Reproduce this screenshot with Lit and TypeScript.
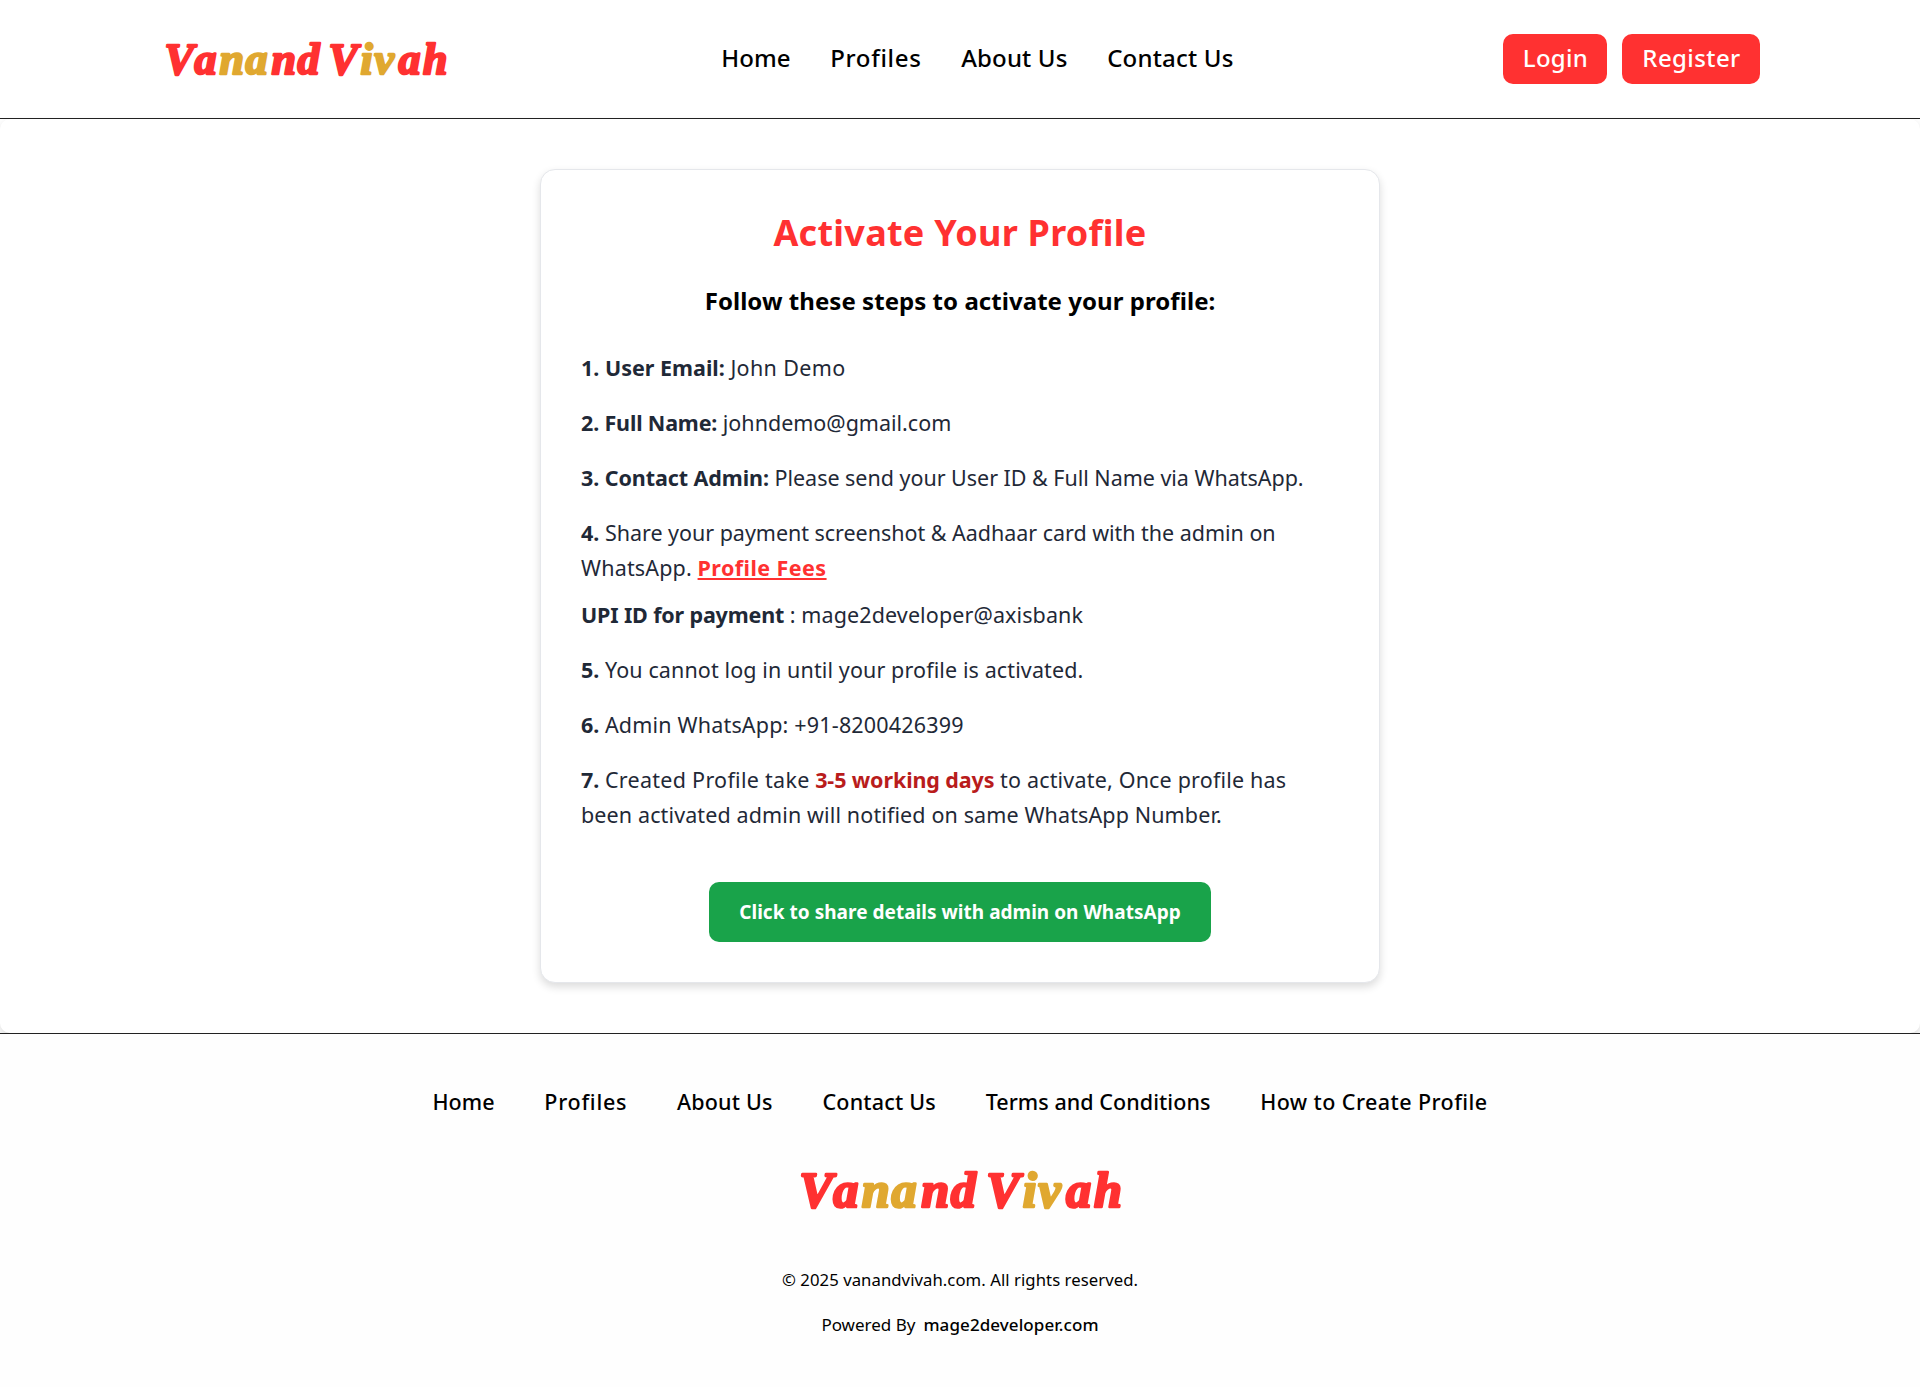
import { LitElement, html, svg, css } from "lit";
import { customElement, property } from "lit/decorators.js";
import { styleMap } from "lit/directives/style-map.js";

/** A piece of text with its tracking in pixels and an optional style name. */
interface Run {
  text: string;
  track: number;
  kind?: "bold" | "fees" | "days";
}

const run = (r: Run) =>
  html`<span class=${r.kind ?? "plain"} style=${styleMap({ letterSpacing: `${r.track}px` })}>${r.text}</span>`;

const NAV: Run[] = [
  { text: "Home", track: 0 },
  { text: "Profiles", track: 0.68 },
  { text: "About Us", track: 0.14 },
  { text: "Contact Us", track: 0.2 },
];

const ACTIONS: Run[] = [
  { text: "Login", track: 0.3 },
  { text: "Register", track: 0.4 },
];

const FOOTER_LINKS: Run[] = [
  { text: "Home", track: 0.05 },
  { text: "Profiles", track: 0.75 },
  { text: "About Us", track: 0.2 },
  { text: "Contact Us", track: 0.2 },
  { text: "Terms and Conditions", track: 0.06 },
  { text: "How to Create Profile", track: 0.43 },
];

const STEPS: { tight?: boolean; lines: Run[][] }[] = [
  { lines: [[{ text: "1. User Email:", track: 0, kind: "bold" }, { text: "John Demo", track: 0.36 }]] },
  { lines: [[{ text: "2. Full Name:", track: -0.16, kind: "bold" }, { text: "johndemo@gmail.com", track: -0.01 }]] },
  {
    lines: [
      [
        { text: "3. Contact Admin:", track: -0.08, kind: "bold" },
        { text: "Please send your User ID & Full Name via WhatsApp.", track: -0.025 },
      ],
    ],
  },
  {
    lines: [
      [
        { text: "4.", track: 0, kind: "bold" },
        { text: "Share your payment screenshot & Aadhaar card with the admin on", track: -0.03 },
      ],
      [{ text: "WhatsApp.", track: 0.18 }, { text: "Profile Fees", track: 0.43, kind: "fees" }],
    ],
  },
  {
    tight: true,
    lines: [[{ text: "UPI ID for payment", track: -0.16, kind: "bold" }, { text: ": mage2developer@axisbank", track: 0.11 }]],
  },
  {
    lines: [
      [{ text: "5.", track: 0, kind: "bold" }, { text: "You cannot log in until your profile is activated.", track: 0.115 }],
    ],
  },
  { lines: [[{ text: "6.", track: 0, kind: "bold" }, { text: "Admin WhatsApp: +91-8200426399", track: 0.185 }]] },
  {
    lines: [
      [
        { text: "7.", track: 0, kind: "bold" },
        { text: "Created Profile take", track: 0.28 },
        { text: "3-5 working days", track: -0.11, kind: "days" },
        { text: "to activate, Once profile has", track: 0.185 },
      ],
      [{ text: "been activated admin will notified on same WhatsApp Number.", track: 0.122 }],
    ],
  },
];

@customElement("brand-logo")
export class BrandLogo extends LitElement {
  static styles = css`
    :host { display: block; }
    .mark { display: block; width: 100%; height: auto; overflow: visible; }
    .word {
      font-family: "Liberation Serif", serif;
      font-size: 44px;
      font-weight: 700;
      font-style: italic;
      stroke-width: 2.4;
      stroke-linejoin: round;
    }
    .red { fill: #ff3131; stroke: #ff3131; }
    .gold { fill: #e0a830; stroke: #e0a830; }
  `;

  render() {
    const part = (cls: string, x: string, text: string) => svg`<tspan class=${cls} x=${x}>${text}</tspan>`;
    return html`<svg class="mark" viewBox="0 0 292 56" role="img" aria-label="Vanand Vivah">
      <text class="word" y="43">${part("red", "4.5 34.5", "Va")}${part("gold", "59.5 85.5", "na")}${part("red", "111.5 137.5", "nd")}${part("red", "168.5", "V")}${part("gold", "200.5 214.5", "iv")}${part("red", "238.5 263", "ah")}</text>
    </svg>`;
  }
}

@customElement("site-header")
export class SiteHeader extends LitElement {
  static styles = css`
    :host { display: block; }
    .bar {
      box-sizing: border-box;
      height: 119px;
      padding: 0 160px;
      display: flex;
      align-items: center;
      justify-content: space-between;
      border-bottom: 1px solid #222;
      background: #fff;
      font-size: 24px;
      font-weight: 500;
      line-height: 36px;
      color: #000;
    }
    .logo { width: 292px; }
    .nav { display: flex; gap: 39.7px; padding-bottom: 2px; }
    .actions { display: flex; gap: 15px; }
    .btn {
      box-sizing: border-box;
      height: 50px;
      padding: 6px 0 8px 1px;
      border-radius: 10px;
      background: #ff3131;
      color: #fff;
      text-align: center;
    }
    .login { width: 104px; }
    .register { width: 138px; }
  `;

  render() {
    return html`<header class="bar">
      <brand-logo class="logo"></brand-logo>
      <nav class="nav">${NAV.map((n) => html`<a>${run(n)}</a>`)}</nav>
      <div class="actions">
        <a class="btn login">${run(ACTIONS[0])}</a>
        <a class="btn register">${run(ACTIONS[1])}</a>
      </div>
    </header>`;
  }
}

@customElement("activation-card")
export class ActivationCard extends LitElement {
  @property({ attribute: false }) steps = STEPS;

  static styles = css`
    :host { display: block; }
    .card {
      box-sizing: border-box;
      width: 840px;
      padding: 41px 40px 40px;
      border: 1px solid #e5e7eb;
      border-radius: 15px;
      background: #fff;
      box-shadow: 0 4px 8px rgba(0, 0, 0, 0.14);
      display: flex;
      flex-direction: column;
      align-items: center;
    }
    .title { margin: 0; font-size: 36px; font-weight: 700; line-height: 44px; color: #ff3131; letter-spacing: 0.26px; }
    .subtitle { margin: 28px 0 31px; font-size: 24px; font-weight: 700; line-height: 36px; color: #000; letter-spacing: 0.05px; }
    .steps { align-self: stretch; font-size: 21.5px; line-height: 35px; color: #1f2937; }
    .step { margin-top: 20px; white-space: nowrap; }
    .step:first-child { margin-top: 0; }
    .tight { margin-top: 12px; }
    .bold, .fees, .days { font-weight: 700; }
    .fees { color: #ff3131; text-decoration: underline; text-decoration-thickness: 2px; text-underline-offset: 2px; }
    .days { color: #b91c1c; }
    .share {
      margin-top: 50px;
      width: 502px;
      height: 60px;
      border-radius: 10px;
      background: #19a34a;
      color: #fff;
      font-size: 19px;
      font-weight: 700;
      line-height: 60px;
      letter-spacing: 0.03px;
      text-align: center;
    }
  `;

  render() {
    return html`<section class="card">
      <h1 class="title">Activate Your Profile</h1>
      <h2 class="subtitle">Follow these steps to activate your profile:</h2>
      <div class="steps">
        ${this.steps.map(
          (s) => html`<div class="step ${s.tight ? "tight" : ""}">
            ${s.lines.map((line) => html`<div>${line.map((r, i) => html`${i ? " " : ""}${run(r)}`)}</div>`)}
          </div>`,
        )}
      </div>
      <a class="share">Click to share details with admin on WhatsApp</a>
    </section>`;
  }
}

@customElement("site-footer")
export class SiteFooter extends LitElement {
  static styles = css`
    :host { display: block; position: relative; }
    .foot {
      box-sizing: border-box;
      height: 354px;
      padding-top: 50px;
      border-top: 1px solid #222;
      background: #fefefe;
      color: #000;
      display: flex;
      flex-direction: column;
      align-items: center;
    }
    .links { display: flex; gap: 49.7px; font-size: 21.5px; font-weight: 500; line-height: 35px; }
    .logo { width: 333px; margin-top: 39px; }
    .note { margin-top: 44px; font-size: 16.7px; line-height: 27px; letter-spacing: 0.06px; }
    .powered { margin-top: 18px; font-size: 17px; line-height: 27px; display: flex; gap: 8px; }
    .maker { font-weight: 500; letter-spacing: 0.08px; }
  `;

  render() {
    return html`<footer class="foot">
      <nav class="links">${FOOTER_LINKS.map((n) => html`<a>${run(n)}</a>`)}</nav>
      <brand-logo class="logo"></brand-logo>
      <div class="note">© 2025 vanandvivah.com. All rights reserved.</div>
      <div class="powered"><span>Powered By</span><a class="maker">mage2developer.com</a></div>
    </footer>`;
  }
}

@customElement("app-root")
export class AppRoot extends LitElement {
  static styles = css`
    :host { display: block; background: #fff; font-family: "Noto Sans", "Open Sans", sans-serif; }
    .main {
      box-sizing: border-box;
      height: 914px;
      padding-top: 50px;
      display: flex;
      justify-content: center;
      align-items: flex-start;
      border-radius: 10px;
      background: #fff;
      box-shadow: 0 4px 8px rgba(0, 0, 0, 0.14);
    }
  `;

  render() {
    return html`<site-header></site-header>
      <main class="main"><activation-card></activation-card></main>
      <site-footer></site-footer>`;
  }
}
